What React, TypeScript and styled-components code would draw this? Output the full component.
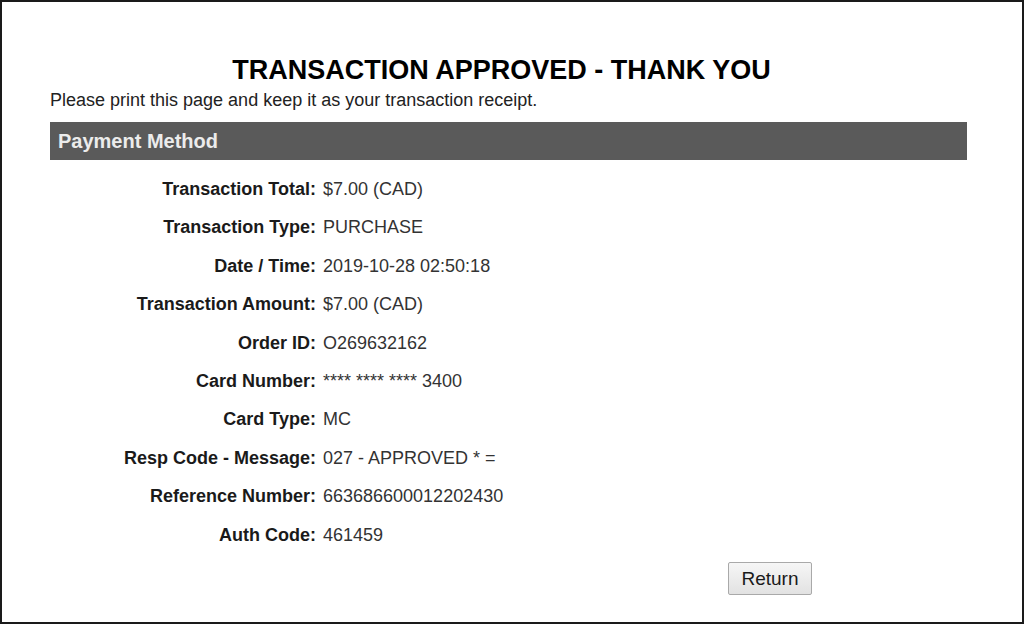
import React from "react";
import styled, { createGlobalStyle } from "styled-components";

const Global = createGlobalStyle`
  html, body { margin: 0; padding: 0; background: #fff; }
  body { font-family: "Liberation Sans", Arial, sans-serif; }
`;

const Frame = styled.div`
  box-sizing: border-box;
  width: 1024px;
  height: 624px;
  border: 2px solid #1a1a1a;
  background: #fff;
  padding: 52px 55px 0 48px;
`;

const Title = styled.h1`
  margin: 0;
  padding-right: 14px;
  text-align: center;
  font-size: 27px;
  line-height: 32px;
  font-weight: bold;
  color: #000;
`;

const Note = styled.p`
  margin: 3px 0 0;
  font-size: 18px;
  line-height: 22px;
  color: #222;
`;

const SectionBar = styled.div`
  margin-top: 11px;
  height: 38px;
  background: #5a5a5a;
  display: flex;
  align-items: center;
  padding-left: 8px;
  font-size: 20px;
  font-weight: bold;
  color: #ececec;
`;

const Details = styled.div`
  display: grid;
  grid-template-columns: 266px 1fr;
  column-gap: 7px;
  padding-top: 10px;
`;

const Label = styled.div`
  text-align: right;
  font-weight: bold;
  font-size: 18px;
  line-height: 38.4px;
  color: #1a1a1a;
`;

const Value = styled.div`
  font-size: 18px;
  line-height: 38.4px;
  color: #333;
`;

const Actions = styled.div`
  display: flex;
  padding-left: 678px;
  padding-top: 8px;
`;

const Button = styled.button`
  box-sizing: border-box;
  width: 84px;
  height: 33px;
  font-family: "Liberation Sans", Arial, sans-serif;
  font-size: 19px;
  color: #1a1a1a;
  background: linear-gradient(#f6f6f6, #e2e2e2);
  border: 1px solid #a9a9a9;
  border-radius: 2px;
  padding: 0;
`;

const rows: [string, string][] = [
  ["Transaction Total:", "$7.00 (CAD)"],
  ["Transaction Type:", "PURCHASE"],
  ["Date / Time:", "2019-10-28 02:50:18"],
  ["Transaction Amount:", "$7.00 (CAD)"],
  ["Order ID:", "O269632162"],
  ["Card Number:", "**** **** **** 3400"],
  ["Card Type:", "MC"],
  ["Resp Code - Message:", "027 - APPROVED * ="],
  ["Reference Number:", "663686600012202430"],
  ["Auth Code:", "461459"],
];

export default function App() {
  return (
    <>
      <Global />
      <Frame>
        <Title>TRANSACTION APPROVED - THANK YOU</Title>
        <Note>Please print this page and keep it as your transaction receipt.</Note>
        <SectionBar>Payment Method</SectionBar>
        <Details>
          {rows.map(([l, v]) => (
            <React.Fragment key={l}>
              <Label>{l}</Label>
              <Value>{v}</Value>
            </React.Fragment>
          ))}
        </Details>
        <Actions>
          <Button>Return</Button>
        </Actions>
      </Frame>
    </>
  );
}
